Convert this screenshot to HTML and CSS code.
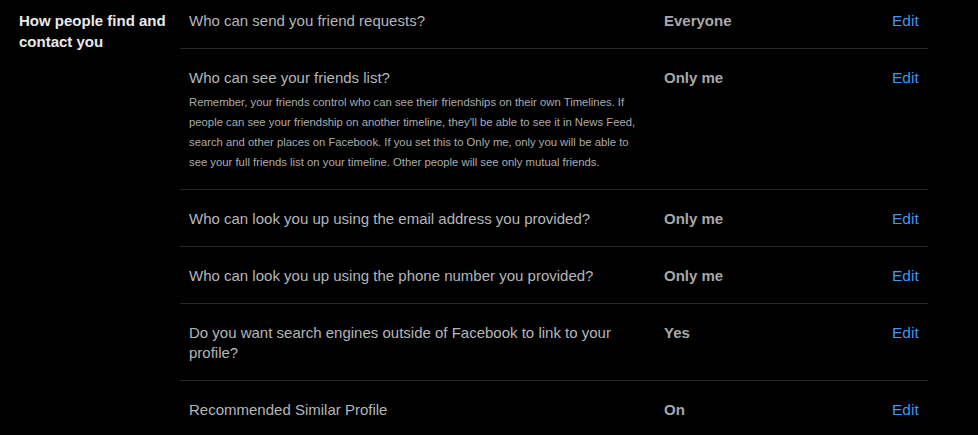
FILE: index.html
```html
<!DOCTYPE html>
<html lang="en">
<head>
  <meta charset="UTF-8">
  <title>Privacy Settings</title>
  <link rel="stylesheet" href="styles.css">
</head>
<body>

<div class="section">
  <h3 class="section-title">How people find and contact you</h3>
  <div class="rows">
    <div class="row">
      <div class="question">Who can send you friend requests?</div>
      <div class="value">Everyone</div>
      <a class="edit" href="#">Edit</a>
    </div>
    <div class="row">
      <div class="question">
        Who can see your friends list?
        <p class="desc">Remember, your friends control who can see their friendships on their own Timelines. If people can see your friendship on another timeline, they'll be able to see it in News Feed, search and other places on Facebook. If you set this to Only me, only you will be able to see your full friends list on your timeline. Other people will see only mutual friends.</p>
      </div>
      <div class="value">Only me</div>
      <a class="edit" href="#">Edit</a>
    </div>
    <div class="row">
      <div class="question">Who can look you up using the email address you provided?</div>
      <div class="value">Only me</div>
      <a class="edit" href="#">Edit</a>
    </div>
    <div class="row">
      <div class="question">Who can look you up using the phone number you provided?</div>
      <div class="value">Only me</div>
      <a class="edit" href="#">Edit</a>
    </div>
    <div class="row">
      <div class="question">Do you want search engines outside of Facebook to link to your profile?</div>
      <div class="value">Yes</div>
      <a class="edit" href="#">Edit</a>
    </div>
    <div class="row">
      <div class="question">Recommended Similar Profile</div>
      <div class="value">On</div>
      <a class="edit" href="#">Edit</a>
    </div>
  </div>
</div>

</body>
</html>
```

FILE: styles.css
```css
body { margin: 0; background: #000; font-family: "Liberation Sans", Arial, sans-serif; color: #b4b6ba; }
.section { display: flex; margin-top: -8px; }
.section-title { width: 161px; padding-left: 19px; margin: 0; padding-top: 18px; font-size: 15px; line-height: 21px; font-weight: bold; color: #e8e9ec; }
.rows { width: 748px; }
.row { display: flex; padding: 19px 9px 17px; border-bottom: 1px solid #26272a; font-size: 15px; line-height: 20px; }
.question { width: 452px; margin-right: 23px; }
.desc { margin: 4px 0 0; font-size: 11.3px; line-height: 20px; color: #a9abaf; }
.value { width: 228px; font-weight: bold; color: #a6a8ac; }
.edit { color: #3d97f5; text-decoration: none; font-size: 15.5px; }
```
